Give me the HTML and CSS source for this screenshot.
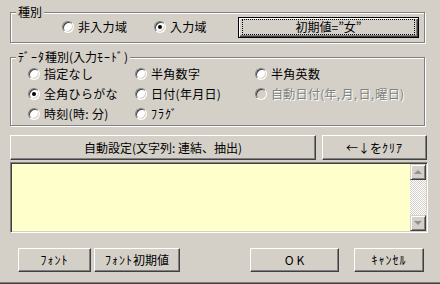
FILE: index.html
```html
<!DOCTYPE html>
<html lang="ja">
<head>
<meta charset="utf-8">
<link rel="stylesheet" href="styles.css">
</head>
<body>
<div class="dlg">
  <div class="grp g1">
    <span class="cap">種別</span>
    <label class="radio r1"><span class="rb"></span>非入力域</label>
    <label class="radio r2"><span class="rb on"></span>入力域</label>
    <button class="btn def"><span class="focus">初期値=”女”</span></button>
  </div>
  <div class="grp g2">
    <span class="cap"><span class="hk">ﾃﾞｰﾀ</span>種別(入力<span class="hk">ﾓｰﾄﾞ</span>)</span>
    <label class="radio"><span class="rb"></span>指定なし</label>
    <label class="radio"><span class="rb"></span>半角数字</label>
    <label class="radio"><span class="rb"></span>半角英数</label>
    <label class="radio"><span class="rb on"></span>全角ひらがな</label>
    <label class="radio"><span class="rb"></span>日付(年月日)</label>
    <label class="radio dis"><span class="rb"></span>自動日付(年, 月, 日, 曜日)</label>
    <label class="radio"><span class="rb"></span>時刻(時: 分)</label>
    <label class="radio"><span class="rb"></span><span class="hk">ﾌﾗｸﾞ</span></label>
  </div>
  <div class="row2">
    <button class="btn auto">自動設定(文字列: 連結、抽出)</button>
    <button class="btn clr">←↓を<span class="hk">ｸﾘｱ</span></button>
  </div>
  <div class="memo">
    <div class="sb">
      <div class="sbb"><span class="tri up"></span></div>
      <div class="trk"></div>
      <div class="sbb"><span class="tri dn"></span></div>
    </div>
  </div>
  <div class="foot">
    <button class="btn font"><span class="hk">ﾌｫﾝﾄ</span></button>
    <button class="btn finit"><span class="hk">ﾌｫﾝﾄ</span>初期値</button>
    <button class="btn ok">O K</button>
    <button class="btn cancel"><span class="hk">ｷｬﾝｾﾙ</span></button>
  </div>
</div>
</body>
</html>
```
FILE: styles.css
```css
html, body {
  margin: 0;
  background: #d4d0c8;
}
body {
  font: 12px/14px "Noto Sans CJK JP", sans-serif;
  color: #000;
}
.hk { letter-spacing: 1px; }
.dlg {
  width: 440px;
  height: 284px;
  box-sizing: border-box;
  padding: 12px 12px 0 10px;
  border-bottom: 1px solid #404040;
  box-shadow: inset 0 -1px 0 #808080;
  display: flex;
  flex-direction: column;
  align-items: flex-start;
}
.grp {
  position: relative;
  width: 415px;
  box-sizing: border-box;
  border: 1px solid #808080;
  box-shadow: inset 1px 1px 0 #fff, 1px 1px 0 #fff;
}
.cap {
  position: absolute;
  left: 5px;
  top: -8px;
  padding: 0 2px;
  background: #d4d0c8;
  line-height: 14px;
  white-space: nowrap;
}
.g1 {
  height: 31px;
  display: flex;
  align-items: center;
  padding: 0 5px 0 51px;
}
.g1 .radio { margin-top: -2px; }
.g1 .r1 { width: 92px; }
.g1 .r2 { flex: 1; }
.radio {
  display: flex;
  align-items: center;
  gap: 4px;
  white-space: nowrap;
  letter-spacing: 0.3px;
}
.rb {
  flex: none;
  position: relative;
  width: 12px;
  height: 12px;
  box-sizing: border-box;
  border-radius: 50%;
  background: #fff;
  border: 1px solid;
  border-color: #808080 #fff #fff #808080;
  box-shadow: inset 1px 1px 0 #404040, inset -1px -1px 0 #d4d0c8;
}
.rb.on::after {
  content: "";
  position: absolute;
  left: 3px;
  top: 3px;
  width: 4px;
  height: 4px;
  border-radius: 50%;
  background: #000;
}
.dis { color: #808080; text-shadow: 1px 1px 0 #fff; word-spacing: -2px; }
.dis .rb { background: #d4d0c8; }
.btn {
  font: inherit;
  color: #000;
  background: #d4d0c8;
  box-sizing: border-box;
  padding: 0;
  margin: 0;
  border: 1px solid;
  border-color: #fff #404040 #404040 #fff;
  box-shadow: inset -1px -1px 0 #808080;
  border-radius: 0;
  white-space: nowrap;
}
.btn.def {
  width: 181px;
  height: 21px;
  border-color: #000;
  box-shadow: inset 1px 1px 0 #fff, inset -1px -1px 0 #404040, inset -2px -2px 0 #808080;
  display: flex;
  padding: 1px 3px 2px 3px;
}
.focus {
  flex: 1;
  border: 1px dotted #000;
  display: flex;
  align-items: center;
  justify-content: center;
  line-height: 14px;
}
.g2 {
  margin-top: 14px;
  height: 69px;
  padding: 6px 0 0 17px;
  display: grid;
  grid-template-columns: 107px 120px 1fr;
  grid-auto-rows: 20px;
}
.row2 {
  margin-top: 9px;
  width: 417px;
  height: 25px;
  display: flex;
  justify-content: space-between;
}
.auto { width: 306px; }
.clr { width: 105px; }
.memo {
  margin-top: 2px;
  width: 418px;
  height: 71px;
  box-sizing: border-box;
  border: 1px solid;
  border-color: #808080 #fff #fff #808080;
  box-shadow: inset 1px 1px 0 #404040, inset -1px -1px 0 #d4d0c8;
  background: #ffffcc;
  padding: 1px;
  display: flex;
  justify-content: flex-end;
}
.sb {
  width: 16px;
  display: flex;
  flex-direction: column;
  background: repeating-conic-gradient(#fff 0 25%, #d4d0c8 0 50%) 0 0 / 2px 2px;
}
.sbb {
  height: 16px;
  box-sizing: border-box;
  background: #d4d0c8;
  border: 1px solid;
  border-color: #d4d0c8 #404040 #404040 #d4d0c8;
  box-shadow: inset 1px 1px 0 #fff, inset -1px -1px 0 #808080;
  display: flex;
  align-items: center;
  justify-content: center;
}
.trk { flex: 1; }
.tri {
  width: 0;
  height: 0;
  border-left: 4px solid transparent;
  border-right: 4px solid transparent;
}
.tri.up { border-bottom: 4px solid #909090; }
.tri.dn { border-top: 4px solid #909090; }
.foot {
  margin-top: 15px;
  height: 24px;
  display: flex;
  padding-left: 8px;
}
.foot .btn { height: 24px; }
.font { width: 73px; }
.finit { width: 86px; margin-left: 3px; }
.ok { width: 89px; margin-left: 70px; }
.cancel { width: 70px; margin-left: 15px; }
```
